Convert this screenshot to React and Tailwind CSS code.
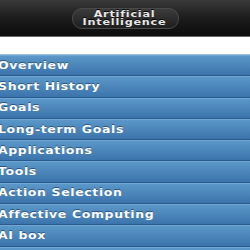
import React from 'react';

const topics = [
  'Overview',
  'Short History',
  'Goals',
  'Long-term Goals',
  'Applications',
  'Tools',
  'Action Selection',
  'Affective Computing',
  'AI box',
  'Robotics',
];

const App = () => {
  return (
    <div className="w-[250px] h-[250px] overflow-hidden bg-white font-['DejaVu_Sans',Verdana,sans-serif]">
      {/* top bar */}
      <div className="h-[37px] flex items-center justify-center bg-gradient-to-b from-[#3a3a3a] via-[#1c1c1c] to-[#0c0c0c] border-b border-[#6a6a6a]">
        <div className="w-[107px] h-[21px] rounded-[10px] border border-[#4a4a4a] bg-gradient-to-b from-[#3c3c3c] to-[#1e1e1e] flex items-center justify-center">
          <div className="flex flex-col items-center scale-x-[1.25] text-[#e8e8e8] font-bold text-[9px] leading-[8.5px] tracking-[0.6px] [text-shadow:0_-1px_0_#000]">
            <span>Artificial</span>
            <span>Intelligence</span>
          </div>
        </div>
      </div>

      {/* spacer */}
      <div className="h-[17px] bg-white" />

      {/* list */}
      <ul className="border-t border-[#9fc0dd]">
        {topics.map((t) => (
          <li
            key={t}
            className="h-[21.3px] flex items-center bg-gradient-to-b from-[#5d99ca] to-[#3b74ab] border-b border-[#2b5b8e] shadow-[inset_0_1px_0_#6ea7d4]"
          >
            <span className="-ml-[2px] origin-left scale-x-[1.25] text-white font-bold text-[10px] tracking-[0.5px] whitespace-nowrap [text-shadow:0_-1px_0_#2a5584]">
              {t}
            </span>
          </li>
        ))}
      </ul>
    </div>
  );
};

export default App;
